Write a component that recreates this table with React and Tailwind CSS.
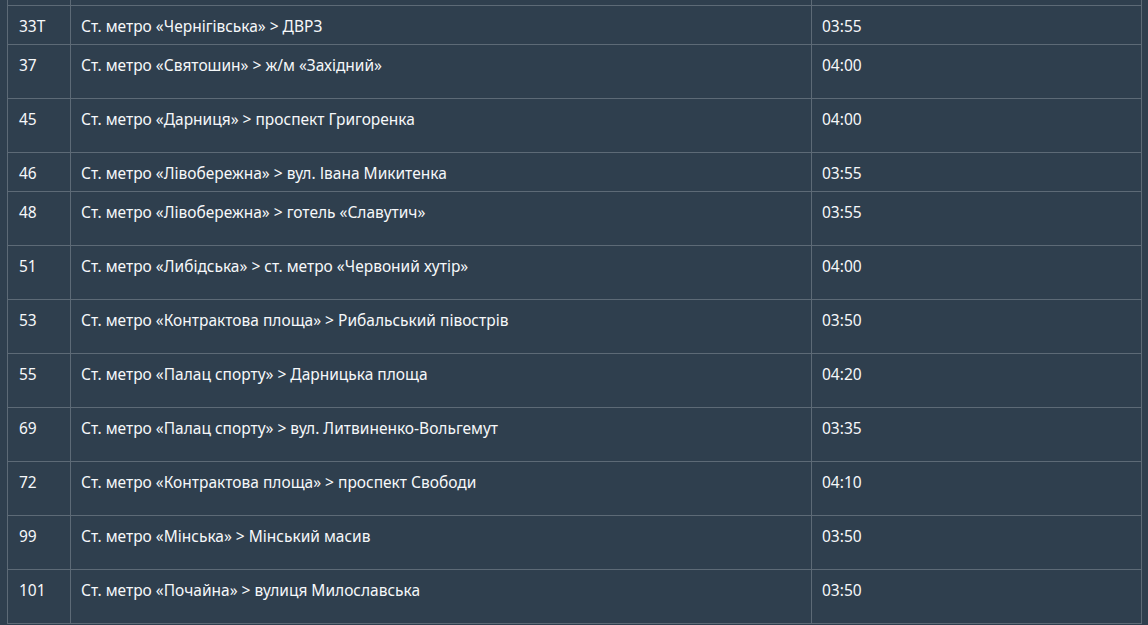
import React from "react";

const rows = [
  ["33Т", "Ст. метро «Чернігівська» > ДВРЗ", "03:55", false],
  ["37", "Ст. метро «Святошин» > ж/м «Західний»", "04:00", true],
  ["45", "Ст. метро «Дарниця» > проспект Григоренка", "04:00", true],
  ["46", "Ст. метро «Лівобережна» > вул. Івана Микитенка", "03:55", false],
  ["48", "Ст. метро «Лівобережна» > готель «Славутич»", "03:55", true],
  ["51", "Ст. метро «Либідська» > ст. метро «Червоний хутір»", "04:00", true],
  ["53", "Ст. метро «Контрактова площа» > Рибальський півострів", "03:50", true],
  ["55", "Ст. метро «Палац спорту» > Дарницька площа", "04:20", true],
  ["69", "Ст. метро «Палац спорту» > вул. Литвиненко-Вольгемут", "03:35", true],
  ["72", "Ст. метро «Контрактова площа» > проспект Свободи", "04:10", true],
  ["99", "Ст. метро «Мінська» > Мінський масив", "03:50", true],
  ["101", "Ст. метро «Почайна» > вулиця Милославська", "03:50", true],
];

export default function App() {
  return (
    <div
      className="w-[1148px] h-[625px] overflow-hidden bg-[#2f3f4e] text-[#f6f8fa] text-[15.5px] leading-[18px]"
      style={{ fontFamily: '"Noto Sans", "DejaVu Sans", sans-serif' }}
    >
      <div className="ml-[7px] w-[1135px] border-x border-[#5d6a76]">
        <div className="flex h-[6px] border-b border-[#5d6a76]">
          <div className="w-[63px] border-r border-[#5d6a76]" />
          <div className="w-[741px] border-r border-[#5d6a76]" />
          <div className="flex-1" />
        </div>
        {rows.map(([n, route, time, tall]) => (
          <div key={n} className="flex border-b border-[#5d6a76]">
            <div
              className={`w-[63px] shrink-0 border-r border-[#5d6a76] pl-[11px] pt-[11px] ${tall ? "pb-[24px]" : "pb-[9px]"}`}
            >
              {n}
            </div>
            <div className="w-[741px] shrink-0 border-r border-[#5d6a76] pl-[10px] pt-[11px]">
              {route}
            </div>
            <div className="flex-1 pl-[10px] pt-[11px]">{time}</div>
          </div>
        ))}
      </div>
    </div>
  );
}
